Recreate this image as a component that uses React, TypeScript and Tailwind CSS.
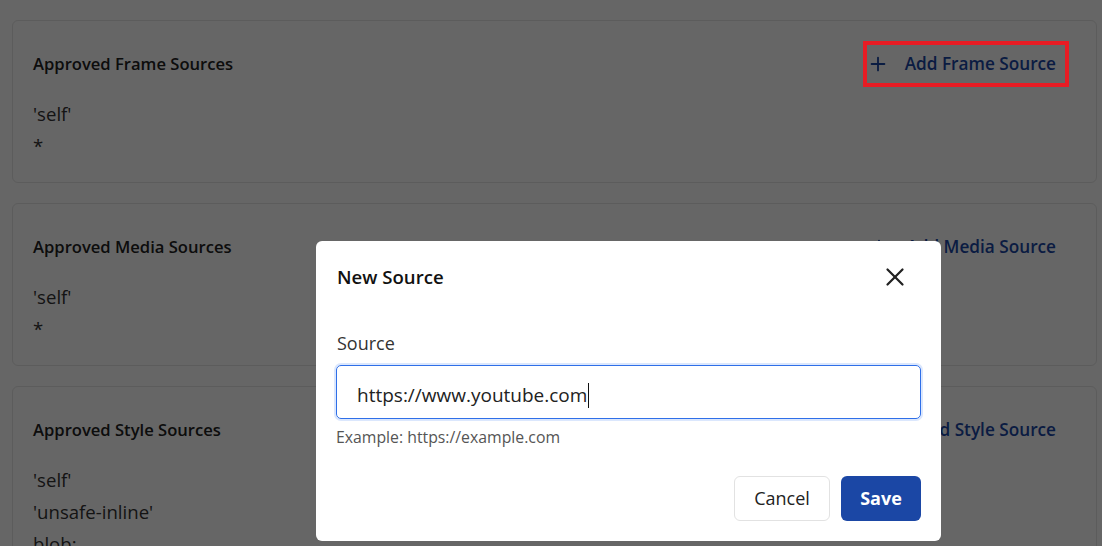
import { X, Plus } from 'lucide-react'

type Section = {
  title: string
  action: string
  items: string[]
  highlight?: boolean
}

const sections: Section[] = [
  { title: 'Approved Frame Sources', action: 'Add Frame Source', items: ["'self'", '*'], highlight: true },
  { title: 'Approved Media Sources', action: 'Add Media Source', items: ["'self'", '*'] },
  { title: 'Approved Style Sources', action: 'Add Style Source', items: ["'self'", "'unsafe-inline'", 'blob:'] },
]

function SourceCard({ section }: { section: Section }) {
  return (
    <div className="border border-[#e6e6e6] rounded-md pl-[20px] pr-[28px] pt-[20px] pb-[20px] bg-white">
      <div className="flex items-center justify-between h-[46px]">
        <h2 className="text-[16.6px] font-semibold text-[#222]">{section.title}</h2>
        <button className="relative flex items-center gap-[16px] h-[46px] pl-[3px] pr-[12px] text-[17.2px] font-semibold text-[#1b47a5]">
          <Plus className="w-[22px] h-[22px]" strokeWidth={2} />
          {section.action}
          {section.highlight && (
            <span className="absolute -left-[1px] -right-[1px] top-0 bottom-0 border-4 border-[#e81c24] z-20" />
          )}
        </button>
      </div>
      <ul className="mt-[11px] text-[18.6px] text-[#333] leading-8">
        {section.items.map(item => (
          <li key={item}>{item}</li>
        ))}
      </ul>
    </div>
  )
}

export default function App() {
  return (
    <div className="relative min-h-screen bg-white overflow-hidden" style={{ fontFamily: '"Open Sans", "Noto Sans", sans-serif' }}>
      <div className="pt-5 pl-3 pr-[5px] flex flex-col gap-5">
        {sections.map(s => (
          <SourceCard key={s.title} section={s} />
        ))}
      </div>

      <div className="fixed inset-0 bg-black/60 z-10" />

      <div className="fixed z-30 left-[316px] top-[241px] w-[625px] h-[300px] bg-white rounded-md pl-[20px] pr-[20px] pt-[21px] pb-[20px] flex flex-col">
        <div className="flex items-center justify-between h-[30px]">
          <h3 className="text-[18.6px] font-semibold text-[#111] pl-[1px]">New Source</h3>
          <button className="text-[#222] mr-[11px]">
            <X className="w-[30px] h-[30px]" strokeWidth={1.8} />
          </button>
        </div>

        <label className="mt-[39px] text-[18px] text-[#333] leading-6 pl-[1px]">Source</label>
        <div className="mt-[10px] h-[54px] border-[1.5px] border-[#2f6fe8] rounded-[5px] ring-2 ring-[#dbe7fd] flex items-center pl-[20px] pt-[6px]">
          <span className="text-[19px] text-[#222]">https://www.youtube.com</span>
          <span className="w-px h-[25px] bg-[#111] ml-[1px]" />
        </div>
        <p className="mt-[7px] text-[15.8px] text-[#555]">Example: https://example.com</p>

        <div className="mt-auto flex justify-end gap-[11px]">
          <button className="h-[45px] w-[96px] rounded-md border border-[#e2e2e2] text-[18px] font-medium text-[#222] bg-white">
            Cancel
          </button>
          <button className="h-[45px] w-[80px] rounded-md bg-[#1b47a5] text-[18px] font-bold text-white">
            Save
          </button>
        </div>
      </div>
    </div>
  )
}
